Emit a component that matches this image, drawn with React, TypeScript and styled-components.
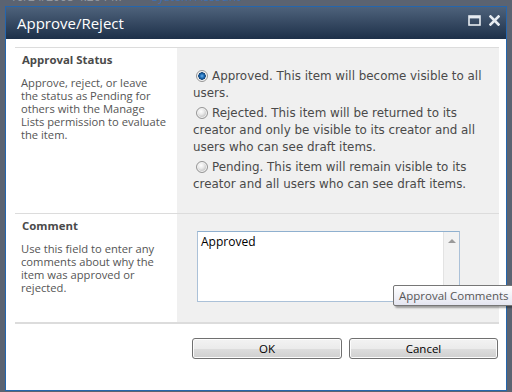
import React from "react";
import styled, { createGlobalStyle } from "styled-components";

const Global = createGlobalStyle`
  html, body { margin: 0; padding: 0; background: #5b6371; overflow: hidden; }
  #root { width: 512px; height: 392px; }
`;

const Page = styled.div`
  position: relative;
  width: 512px;
  height: 392px;
  overflow: hidden;
  background: #5b6371;
  display: flex;
  flex-direction: column;
`;

const BackStrip = styled.div`
  height: 6px;
  overflow: hidden;
  display: flex;
  gap: 30px;
  padding-left: 10px;
  font: 12px/14px "Open Sans", sans-serif;
`;

const BackText = styled.span<{ $link?: boolean }>`
  margin-top: -10px;
  color: ${(p) => (p.$link ? "#3f6fae" : "#959aa2")};
`;

const Dialog = styled.div`
  margin-left: 5px;
  width: 502px;
  height: 385px;
  box-sizing: border-box;
  border: 1px solid #2566ad;
  background: #fff;
  display: flex;
  flex-direction: column;
`;

const TitleBar = styled.div`
  height: 32px;
  flex: none;
  display: flex;
  align-items: flex-start;
  padding: 0 6px 0 11px;
  background: linear-gradient(#4e627b, #1d3049);
`;

const Title = styled.div`
  margin-top: 6px;
  font: 15px/20px "Open Sans", sans-serif;
  color: #ffffff;
`;

const TitleIcons = styled.div`
  margin-left: auto;
  margin-top: 8px;
  display: flex;
  gap: 8px;
  align-items: center;
`;

const Content = styled.div`
  flex: 1;
  padding: 8px 7px 0 9px;
  display: flex;
  flex-direction: column;
`;

const Form = styled.div`
  border-top: 1px solid #dcdcdc;
  display: flex;
  flex-direction: column;
`;

const Section = styled.div<{ $h: number; $last?: boolean }>`
  height: ${(p) => p.$h}px;
  display: grid;
  grid-template-columns: 162px 1fr;
  border-bottom: ${(p) => (p.$last ? "2px" : "1px")} solid #dcdcdc;
`;

const LabelCell = styled.div`
  padding: 4px 0 0 7px;
  font-family: "Open Sans", sans-serif;
`;

const Heading = styled.div`
  font-weight: bold;
  font-size: 11.4px;
  line-height: 15px;
  color: #4a4a4a;
  margin-bottom: 9px;
`;

const Desc = styled.div`
  font-size: 11.2px;
  line-height: 13px;
  color: #555555;
  margin-left: -1px;
`;

const ControlCell = styled.div<{ $pt: number; $pl: number }>`
  background: #f0f0f0;
  padding: ${(p) => p.$pt}px 0 0 ${(p) => p.$pl}px;
`;

const Option = styled.div`
  font: 11.9px/17px "DejaVu Sans", Verdana, sans-serif;
  color: #4a4a4a;
  margin-bottom: 3px;
`;

const Radio = styled.span<{ $on?: boolean }>`
  display: inline-block;
  box-sizing: border-box;
  width: 12px;
  height: 12px;
  margin: 0 4px 0 3px;
  vertical-align: -2px;
  border-radius: 50%;
  border: 1px solid #969696;
  background: ${(p) =>
    p.$on
      ? "radial-gradient(circle at 50% 50%, #6fb3ec 0, #1f6eb8 2px, #0d3f74 3.5px, #e6e6e6 4px, #f8f8f8 5px)"
      : "radial-gradient(circle at 40% 35%, #ffffff 0, #e9e9e9 3px, #cfcfcf 5px)"};
  box-shadow: inset 0 0 0 1px #f4f4f4;
`;

const TextBox = styled.div`
  width: 263px;
  height: 71px;
  box-sizing: border-box;
  border: 1px solid #abc1d8;
  border-top-color: #8fb0cf;
  background: #fff;
  display: flex;
`;

const TextValue = styled.div`
  flex: 1;
  padding: 2px 0 0 3px;
  font: 12px/16px "Open Sans", sans-serif;
  color: #000;
`;

const ScrollTrack = styled.div`
  width: 16px;
  background: #f2f2f2;
  border-left: 1px solid #e3e3e3;
  display: flex;
  justify-content: center;
  padding-top: 7px;
  box-sizing: border-box;
`;

const Arrow = styled.div`
  width: 0;
  height: 0;
  border-left: 4px solid transparent;
  border-right: 4px solid transparent;
  border-bottom: 4px solid #9a9a9a;
`;

const Buttons = styled.div`
  margin-top: 14px;
  padding-right: 1px;
  display: flex;
  justify-content: flex-end;
  gap: 7px;
`;

const Button = styled.button<{ $w: number }>`
  width: ${(p) => p.$w}px;
  height: 21px;
  box-sizing: border-box;
  border: 1px solid #707070;
  border-radius: 3px;
  background: linear-gradient(#f3f3f3 0%, #ebebeb 50%, #dddddd 51%, #cfcfcf 100%);
  box-shadow: inset 0 0 0 1px #fcfcfc;
  font: 11.5px/17px "Open Sans", sans-serif;
  color: #000;
  padding: 0;
`;

const Tooltip = styled.div`
  position: absolute;
  left: 393px;
  top: 285px;
  height: 21px;
  box-sizing: border-box;
  padding: 1px 8px 0 5px;
  border: 1px solid #767676;
  border-radius: 2px;
  background: linear-gradient(#ffffff, #e4e5f0);
  box-shadow: 2px 2px 2px rgba(0, 0, 0, 0.35);
  font: 11.5px/17px "Open Sans", sans-serif;
  color: #575757;
  white-space: nowrap;
`;

const MaxIcon = () => (
  <svg width="13" height="11" viewBox="0 0 13 11">
    <rect x="1" y="1" width="11" height="9" fill="none" stroke="#e6ebf1" strokeWidth="1.6" />
    <rect x="1" y="1" width="11" height="2.4" fill="#e6ebf1" />
  </svg>
);

const CloseIcon = () => (
  <svg width="11" height="11" viewBox="0 0 11 11">
    <path d="M1.5 1.5 L9.5 9.5 M9.5 1.5 L1.5 9.5" stroke="#e6ebf1" strokeWidth="2.6" strokeLinecap="square" />
  </svg>
);

export default function App() {
  return (
    <Page>
      <Global />
      <BackStrip>
        <BackText>10/24/2008 4:26 PM</BackText>
        <BackText $link>System Account</BackText>
      </BackStrip>
      <Dialog>
        <TitleBar>
          <Title>Approve/Reject</Title>
          <TitleIcons>
            <MaxIcon />
            <CloseIcon />
          </TitleIcons>
        </TitleBar>
        <Content>
          <Form>
            <Section $h={165}>
              <LabelCell>
                <Heading>Approval Status</Heading>
                <Desc>
                  Approve, reject, or leave
                  <br />
                  the status as Pending for
                  <br />
                  others with the Manage
                  <br />
                  Lists permission to evaluate
                  <br />
                  the item.
                </Desc>
              </LabelCell>
              <ControlCell $pt={20} $pl={16}>
                <Option>
                  <Radio $on />
                  Approved. This item will become visible to all
                  <br />
                  users.
                </Option>
                <Option>
                  <Radio />
                  Rejected. This item will be returned to its
                  <br />
                  creator and only be visible to its creator and all
                  <br />
                  users who can see draft items.
                </Option>
                <Option>
                  <Radio />
                  Pending. This item will remain visible to its
                  <br />
                  creator and all users who can see draft items.
                </Option>
              </ControlCell>
            </Section>
            <Section $h={108} $last>
              <LabelCell>
                <Heading>Comment</Heading>
                <Desc>
                  Use this field to enter any
                  <br />
                  comments about why the
                  <br />
                  item was approved or
                  <br />
                  rejected.
                </Desc>
              </LabelCell>
              <ControlCell $pt={17} $pl={20}>
                <TextBox>
                  <TextValue>Approved</TextValue>
                  <ScrollTrack>
                    <Arrow />
                  </ScrollTrack>
                </TextBox>
              </ControlCell>
            </Section>
          </Form>
          <Buttons>
            <Button $w={150}>OK</Button>
            <Button $w={149}>Cancel</Button>
          </Buttons>
        </Content>
      </Dialog>
      <Tooltip>Approval Comments</Tooltip>
    </Page>
  );
}
